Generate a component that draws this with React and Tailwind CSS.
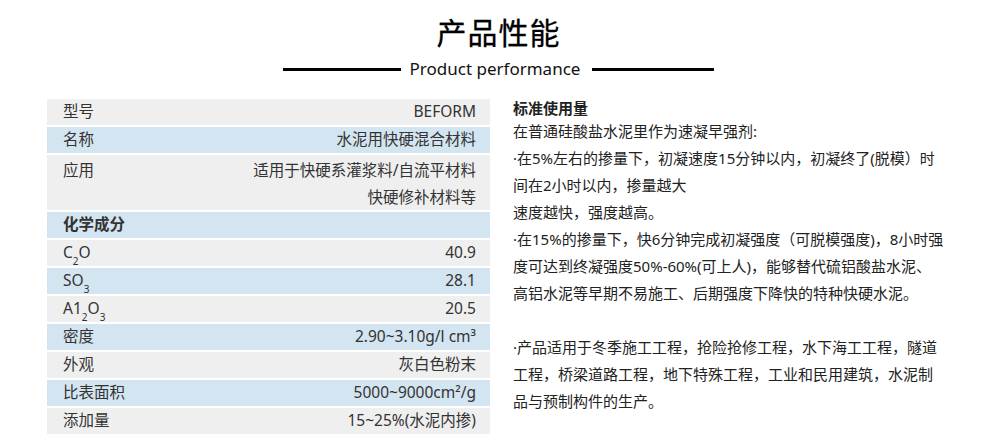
const font = { fontFamily: '"Noto Sans", "Noto Sans CJK SC", sans-serif' };

const rows = [
  { label: '型号', value: 'BEFORM', tone: 'gray' },
  { label: '名称', value: '水泥用快硬混合材料', tone: 'blue' },
  { label: '应用', value: ['适用于快硬系灌浆料/自流平材料', '快硬修补材料等'], tone: 'gray', tall: true },
  { label: '化学成分', value: '', tone: 'blue', bold: true },
  {
    label: (
      <>
        C<sub className="text-[10px] align-[-4px]">2</sub>O
      </>
    ),
    value: '40.9',
    tone: 'gray',
  },
  {
    label: (
      <>
        SO<sub className="text-[10px] align-[-4px]">3</sub>
      </>
    ),
    value: '28.1',
    tone: 'blue',
  },
  {
    label: (
      <>
        A1<sub className="text-[10px] align-[-4px]">2</sub>O<sub className="text-[10px] align-[-4px]">3</sub>
      </>
    ),
    value: '20.5',
    tone: 'gray',
  },
  { label: '密度', value: '2.90~3.10g/l cm³', tone: 'blue' },
  { label: '外观', value: '灰白色粉末', tone: 'gray' },
  { label: '比表面积', value: '5000~9000cm²/g', tone: 'blue' },
  { label: '添加量', value: '15~25%(水泥内掺)', tone: 'gray' },
];

const usage = [
  '在普通硅酸盐水泥里作为速凝早强剂:',
  '·在5%左右的掺量下，初凝速度15分钟以内，初凝终了(脱模）时',
  '间在2小时以内，掺量越大',
  '速度越快，强度越高。',
  '·在15%的掺量下，快6分钟完成初凝强度（可脱模强度)，8小时强',
  '度可达到终凝强度50%-60%(可上人)，能够替代硫铝酸盐水泥、',
  '高铝水泥等早期不易施工、后期强度下降快的特种快硬水泥。',
  '',
  '·产品适用于冬季施工工程，抢险抢修工程，水下海工工程，隧道',
  '工程，桥梁道路工程，地下特殊工程，工业和民用建筑，水泥制',
  '品与预制构件的生产。',
];

const Row = ({ row }) => {
  const bg = row.tone === 'blue' ? 'bg-[#d3e5f1]' : 'bg-[#efefef]';
  if (row.tall) {
    return (
      <div className={`${bg} flex justify-between pl-[16px] pr-[14px] pt-[2px] h-[55px] leading-[27px]`}>
        <span>{row.label}</span>
        <div className="flex flex-col items-end">
          {row.value.map((line) => (
            <span key={line}>{line}</span>
          ))}
        </div>
      </div>
    );
  }
  return (
    <div className={`${bg} flex items-center justify-between pl-[16px] pr-[14px] h-[26px]`}>
      <span className={row.bold ? 'font-bold' : ''}>{row.label}</span>
      <span>{row.value}</span>
    </div>
  );
};

const App = () => {
  return (
    <div className="w-[997px] h-[447px] bg-white text-[#2a2a2a] overflow-hidden" style={font}>
      <div className="flex flex-col items-center pt-[13px]">
        <h1 className="text-[30px] leading-[40px] font-normal text-black tracking-[1px] [-webkit-text-stroke:0.3px_black]">
          产品性能
        </h1>
        <div className="flex items-center mt-[5px]">
          <span className="block w-[118px] h-[3px] bg-black" />
          <span className="text-[17px] leading-[22px] text-[#111] ml-[9px] mr-[12px]">Product performance</span>
          <span className="block w-[122px] h-[3px] bg-black" />
        </div>
      </div>

      <div className="flex mt-[19px] pl-[47px]">
        <div className="w-[443px] flex flex-col gap-[2px] text-[15.5px] text-[#333]">
          {rows.map((row, i) => (
            <Row key={i} row={row} />
          ))}
        </div>

        <div className="ml-[23px] text-[15px] text-[#222] whitespace-nowrap">
          <div className="font-bold leading-[19px]">标准使用量</div>
          {usage.map((line, i) => (
            <div key={i} className="leading-[27px] h-[27px]">
              {line}
            </div>
          ))}
        </div>
      </div>
    </div>
  );
};

export default App;
